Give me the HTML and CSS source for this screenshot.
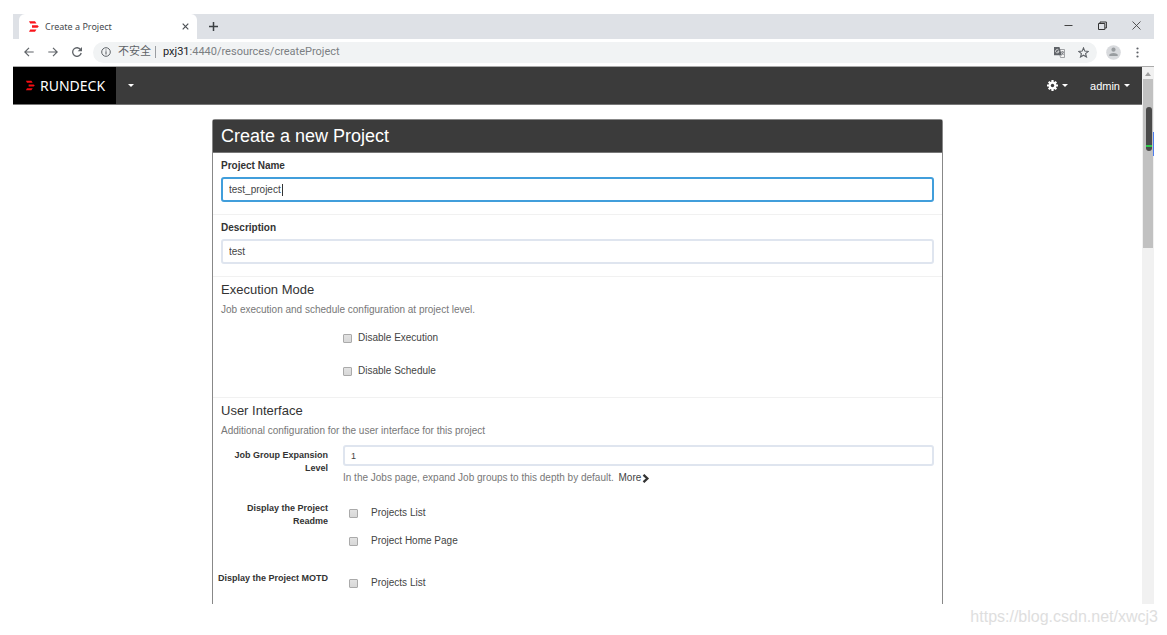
FILE: index.html
```html
<!DOCTYPE html>
<html lang="en">
<head>
<meta charset="utf-8">
<title>Create a Project</title>
<link rel="stylesheet" href="styles.css">
</head>
<body>
<div class="window">
  <div class="tabstrip">
    <div class="tab">
      <svg class="logo" width="11" height="11" viewBox="0 0 11 11"><path d="M1 .3h6l1.500 2.200H2.200zM4 4.300h5.500l1.300 1.200-1.300 1.200H4zM2.200 8.500h6.300L7 10.700H1z" fill="#f9151c"/></svg>
      <span class="tab-title">Create a Project</span>
      <button class="icon-btn" aria-label="Close tab"><svg width="7" height="7" viewBox="0 0 7 7"><path d="M.7.7l5.600 5.600M6.300.7L.7 6.300" stroke="#4d5156" stroke-width="1.200"/></svg></button>
    </div>
    <button class="icon-btn new-tab" aria-label="New tab"><svg width="9" height="9" viewBox="0 0 9 9"><path d="M4.500 0v9M0 4.500h9" stroke="#3c4043" stroke-width="1.500"/></svg></button>
    <div class="window-controls">
      <button class="icon-btn" aria-label="Minimize"><svg width="9" height="9" viewBox="0 0 9 9"><path d="M.5 4.500h8" stroke="#444"/></svg></button>
      <button class="icon-btn" aria-label="Restore"><svg width="9" height="9" viewBox="0 0 9 9"><path d="M.5 2.500h6.300v6H.5zM2 2.500v-1.500h6.400v6H7" fill="none" stroke="#333"/></svg></button>
      <button class="icon-btn" aria-label="Close window"><svg width="9" height="9" viewBox="0 0 9 9"><path d="M.5.5l8 8M8.500.5l-8 8" stroke="#444" stroke-width=".9"/></svg></button>
    </div>
  </div>
  <div class="toolbar">
    <div class="nav-buttons">
      <button class="icon-btn" aria-label="Back"><svg width="10" height="10" viewBox="0 0 10 10"><path d="M9.700 5H1M5 .8L.8 5 5 9.200" fill="none" stroke="#5f6368" stroke-width="1.200"/></svg></button>
      <button class="icon-btn" aria-label="Forward"><svg width="10" height="10" viewBox="0 0 10 10"><path d="M.3 5H9M5 .8L9.200 5 5 9.200" fill="none" stroke="#5f6368" stroke-width="1.200"/></svg></button>
      <button class="icon-btn" aria-label="Reload"><svg width="10" height="10" viewBox="0 0 10 10"><path d="M8.600 2.700A4.300 4.300 0 1 0 9.200 6" fill="none" stroke="#5f6368" stroke-width="1.300"/><path d="M10 0v4.300H5.700z" fill="#5f6368"/></svg></button>
    </div>
    <div class="address">
      <svg width="10" height="10" viewBox="0 0 10 10"><circle cx="5" cy="5" r="4.300" fill="none" stroke="#5f6368"/><path d="M5 4.300v3.200M5 2.400v1.100" stroke="#5f6368" stroke-width="1.100"/></svg>
      <span class="insecure">不安全</span>
      <span class="divider"></span>
      <span class="url"><b>pxj31</b>:4440/resources/createProject</span>
      <span class="address-actions">
        <button class="icon-btn" aria-label="Translate"><svg width="11" height="11" viewBox="0 0 11 11"><path d="M4.500 2.500h6v8h-4z" fill="#f4f4f4" stroke="#8a8d91" stroke-width=".8"/><path d="M0 0h5.500l2.300 8.300H0z" fill="#5f6368"/><path d="M4.600 3.200A1.700 1.700 0 1 0 4.900 4.400H3.400" fill="none" stroke="#eee" stroke-width=".8"/><path d="M7 5h3M8.500 4.300V5M9.500 5.200Q9 7 7.600 7.900M7.600 5.500l2 2.500" fill="none" stroke="#5f6368" stroke-width=".7"/></svg></button>
        <button class="icon-btn" aria-label="Bookmark"><svg width="11" height="11" viewBox="0 0 11 11"><path d="M5.500.9l1.300 3.200 3.500.3-2.700 2.200.9 3.400-3-1.800-3 1.800.9-3.400L.7 4.400l3.500-.3z" fill="none" stroke="#5f6368" stroke-width="1.100"/></svg></button>
      </span>
    </div>
    <button class="icon-btn" aria-label="Profile"><svg width="15" height="15" viewBox="0 0 15 15"><circle cx="7.500" cy="7.500" r="7.300" fill="#d8dadd"/><circle cx="7.500" cy="4.700" r="2.100" fill="#999da0"/><path d="M3.300 11V9.500Q4.300 7.900 7.500 7.900t4.200 1.600V11z" fill="#999da0"/></svg></button>
    <button class="icon-btn menu" aria-label="Menu"><svg width="3" height="11" viewBox="0 0 3 11"><g fill="#5f6368"><circle cx="1.500" cy="1.500" r="1.100"/><circle cx="1.500" cy="5.500" r="1.100"/><circle cx="1.500" cy="9.500" r="1.100"/></g></svg></button>
  </div>
  <div class="viewport">
    <div class="page">
      <nav class="navbar">
        <a class="brand" href="#"><svg width="10" height="11" viewBox="0 0 11 11"><path d="M1 .3h6l1.500 2.200H2.200zM4 4.300h5.500l1.300 1.200-1.300 1.200H4zM2.200 8.500h6.300L7 10.700H1z" fill="#f40d12"/></svg>RUNDECK</a>
        <button class="nav-item" aria-label="Projects"><span class="caret"></span></button>
        <div class="nav-right">
          <button class="nav-item" aria-label="Settings"><svg width="11" height="11" viewBox="0 0 11 11"><g stroke="#fff" stroke-width="2.200"><path d="M5.500 0v11M0 5.500h11M1.700 1.700l7.600 7.600M9.300 1.700L1.700 9.300"/></g><circle cx="5.500" cy="5.500" r="3.900" fill="#fff"/><circle cx="5.500" cy="5.500" r="1.700" fill="#3b3b3b"/></svg><span class="caret"></span></button>
          <button class="nav-item">admin<span class="caret"></span></button>
        </div>
      </nav>
      <form class="panel">
        <h1 class="panel-title">Create a new Project</h1>
        <section class="section">
          <label class="label" for="name">Project Name</label>
          <span class="name-field"><input class="input input-active" id="name" type="text" value="test_project"><span class="cursor"></span></span>
        </section>
        <section class="section">
          <label class="label" for="desc">Description</label>
          <input class="input" id="desc" type="text" value="test">
        </section>
        <section class="section section-modes">
          <h2 class="heading">Execution Mode</h2>
          <p class="help">Job execution and schedule configuration at project level.</p>
          <div class="modes">
            <label class="check"><input class="box" type="checkbox">Disable Execution</label>
            <label class="check"><input class="box" type="checkbox">Disable Schedule</label>
          </div>
        </section>
        <section class="section section-ui">
          <h2 class="heading">User Interface</h2>
          <p class="help">Additional configuration for the user interface for this project</p>
          <div class="row">
            <label class="row-label" for="level">Job Group Expansion Level</label>
            <div>
              <input class="input input-small" id="level" type="text" value="1">
              <p class="help">In the Jobs page, expand Job groups to this depth by default. <a class="more" href="#">More<svg width="8" height="9" viewBox="0 0 8 9"><path d="M1.500.8l3.900 3.700-3.900 3.700" fill="none" stroke="#333" stroke-width="2.300"/></svg></a></p>
            </div>
          </div>
          <div class="row" role="group" aria-labelledby="readme">
            <span class="row-label" id="readme">Display the Project Readme</span>
            <div class="options">
              <label class="check option"><input class="box" type="checkbox">Projects List</label>
              <label class="check option"><input class="box" type="checkbox">Project Home Page</label>
            </div>
          </div>
          <div class="row" role="group" aria-labelledby="motd">
            <span class="row-label" id="motd">Display the Project MOTD</span>
            <div class="options">
              <label class="check option"><input class="box" type="checkbox">Projects List</label>
            </div>
          </div>
        </section>
      </form>
    </div>
    <div class="scrollbar">
      <svg class="arrow" width="6" height="4" viewBox="0 0 6 4"><path d="M0 4l3-4 3 4z" fill="#a0a0a0"/></svg>
      <div class="thumb"></div>
      <div class="pill"></div>
      <div class="marker"></div>
    </div>
  </div>
</div>
<footer class="watermark">https://blog.csdn.net/xwcj3</footer>
</body>
</html>
```
FILE: styles.css
```css
* { box-sizing: border-box; }
body {
  margin: 0;
  min-height: 100vh;
  padding: 14px 13px 0;
  display: flex;
  flex-direction: column;
  background: #fff;
  color: #333;
  font: 10px/16px "Liberation Sans", Arial, sans-serif;
}
h1, h2, p { margin: 0; font-weight: normal; }
button, input { font: inherit; color: inherit; margin: 0; }
a { color: inherit; text-decoration: none; }
svg { display: block; flex: none; }
.window { flex: 1; display: flex; flex-direction: column; }
.icon-btn { display: flex; padding: 0; border: 0; background: none; }

.tabstrip { display: flex; align-items: center; height: 25px; padding-left: 6px; background: #dee1e6; }
.tab {
  display: flex;
  align-items: center;
  gap: 6px;
  width: 178px;
  height: 25px;
  padding: 0 8px 0 9px;
  border-radius: 6px 6px 0 0;
  background: #fff;
  color: #45494d;
  font: 9px/12px "Noto Sans", sans-serif;
}
.tab-title { flex: 1; }
.new-tab { margin-left: 12px; }
.window-controls { display: flex; gap: 25px; margin-left: auto; padding: 0 13px 3px 0; }

.toolbar { display: flex; align-items: center; height: 27px; padding: 0 15px 1px 11px; gap: 9px; }
.nav-buttons { display: flex; gap: 14px; margin-right: 2px; }
.menu { margin-left: 6px; }
.address {
  flex: 1;
  display: flex;
  align-items: center;
  height: 21px;
  padding: 0 8px;
  border-radius: 11px;
  background: #f1f3f4;
  color: #7b7f83;
  font: 11px/16px Roboto, "Noto Sans CJK SC", sans-serif;
}
.insecure { margin-left: 7px; color: #5f6368; }
.divider { width: 1px; height: 12px; margin: 0 7px 0 4px; background: #9a9da1; }
.url b { font-weight: normal; color: #202124; }
.address-actions { display: flex; gap: 13px; margin-left: auto; }

.viewport { flex: 1; display: flex; border-top: 1px solid #aaa; }
.page { flex: 1; display: flex; flex-direction: column; align-items: center; }
.navbar { align-self: stretch; display: flex; height: 38px; background: #3b3b3b; border-bottom: 1px solid #777; color: #fff; font-size: 11px; }
.brand {
  display: flex;
  align-items: center;
  gap: 5px;
  padding: 0 11px 0 12px;
  background: #000;
  font: 14px/20px "Noto Sans", sans-serif;
}
.nav-item { display: flex; align-items: center; gap: 5px; padding: 0 12px; border: 0; background: none; }
.nav-right { display: flex; margin-left: auto; }
.nav-right .nav-item { gap: 4px; padding: 0 12px 0 10px; }
.caret { border: 3px solid transparent; border-top-color: #fff; border-bottom: 0; }

.panel {
  flex: 1;
  width: 65%;
  max-width: 731px;
  margin-top: 14px;
  border: 1px solid #888;
  border-bottom: 0;
  border-radius: 3px 3px 0 0;
}
.panel-title { padding: 4px 8px; background: #3b3b3b; border-bottom: 1px solid #777; color: #fff; font-size: 18px; line-height: 24px; }
.section { padding: 5px 8px 12px; border-bottom: 1px solid #f1f1f1; }
.label { display: block; margin-bottom: 3px; font-weight: bold; }
.input {
  display: block;
  width: 100%;
  height: 25px;
  padding: 0 6px;
  border: 2px solid #dfe5ef;
  border-radius: 3px;
  background: #fff;
  color: #444;
  outline: 0;
}
.input-active { border-color: #419edb; }
.name-field { display: block; position: relative; }
.cursor { position: absolute; left: 61px; top: 7px; width: 1px; height: 12px; background: #333; }
.heading { font-size: 13px; line-height: 16px; }
.help { margin-top: 4px; color: #777; }
.section-modes { padding-bottom: 18px; }
.modes { display: flex; flex-direction: column; gap: 17px; padding: 12px 0 0 122px; }
.check { display: flex; align-items: center; gap: 6px; color: #444; }
.box {
  appearance: none;
  width: 9px;
  height: 9px;
  border: 1px solid #aaa;
  border-radius: 1px;
  background: linear-gradient(#e2e2e2, #d8d8d8);
}
.section-ui { border-bottom: 0; padding: 5px 8px 0 3px; }
.section-ui .heading, .section-ui > .help { padding-left: 5px; }
.row { display: grid; grid-template-columns: 112px 1fr; gap: 15px; margin-top: 6px; }
.row + .row { margin-top: 12px; }
.row-label { padding-top: 4px; text-align: right; font-weight: bold; font-size: 9px; line-height: 13px; }
.input-small { height: 21px; font-size: 9px; }
.more { display: inline-flex; align-items: center; gap: 1px; margin-left: 2px; color: #444; }
.options { display: flex; flex-direction: column; gap: 12px; padding: 7px 0 7px 6px; }
.option { gap: 13px; }

.scrollbar { position: relative; width: 12px; background: #f1f1f1; }
.arrow { margin: 5px auto 3px; }
.thumb { height: 169px; margin: 0 1px; background: #c1c1c1; }
.pill {
  position: absolute;
  right: 2px;
  top: 40px;
  width: 6px;
  height: 44px;
  border-radius: 3px;
  background: linear-gradient(#4a4a4a 38px, #2fc94c 38px, #2fc94c 40px, #4a4a4a 40px);
}
.marker { position: absolute; right: 0; top: 65px; width: 1px; height: 24px; background: #4c7df0; }
.watermark { height: 31px; padding-top: 1px; margin-right: -4px; text-align: right; color: #dedede; font-size: 16px; line-height: 24px; }
```
